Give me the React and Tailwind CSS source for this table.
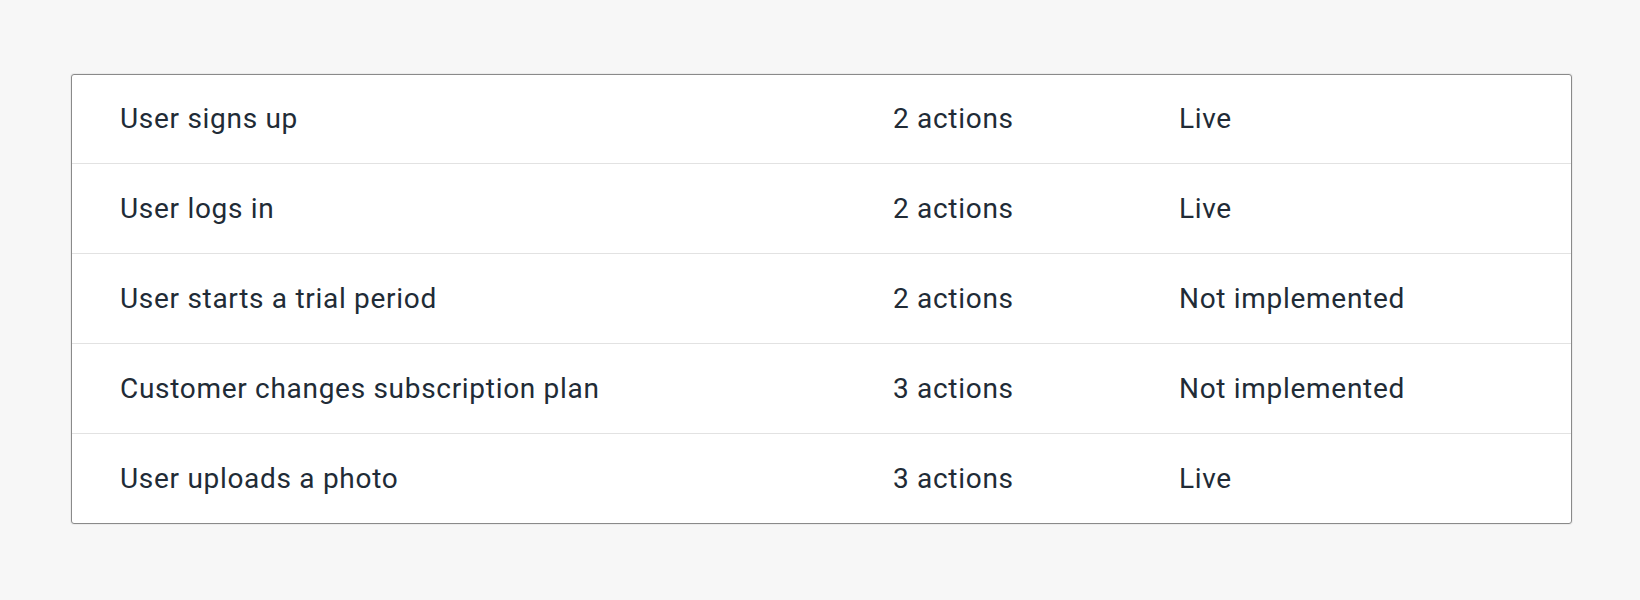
const rows = [
  { name: "User signs up", actions: "2 actions", status: "Live" },
  { name: "User logs in", actions: "2 actions", status: "Live" },
  { name: "User starts a trial period", actions: "2 actions", status: "Not implemented" },
  { name: "Customer changes subscription plan", actions: "3 actions", status: "Not implemented" },
  { name: "User uploads a photo", actions: "3 actions", status: "Live" },
];

export default function App() {
  return (
    <div className="min-h-[600px] bg-[#f7f7f7] pt-[74px] pl-[71px] font-['Roboto',sans-serif]">
      <div className="w-[1501px] bg-white border border-[#8a8a8a] rounded-[3px] shadow-[0_0_0_1px_#ececec]">
        {rows.map((r, i) => (
          <div
            key={r.name}
            className={
              "grid grid-cols-[773px_286px_1fr] items-center pl-12 text-[28px] tracking-[0.7px] text-[#212b36] " +
              (i > 0 ? "h-[90px] border-t border-[#e2e2e2]" : "h-[88px]")
            }
          >
            <span>{r.name}</span>
            <span>{r.actions}</span>
            <span>{r.status}</span>
          </div>
        ))}
      </div>
    </div>
  );
}
